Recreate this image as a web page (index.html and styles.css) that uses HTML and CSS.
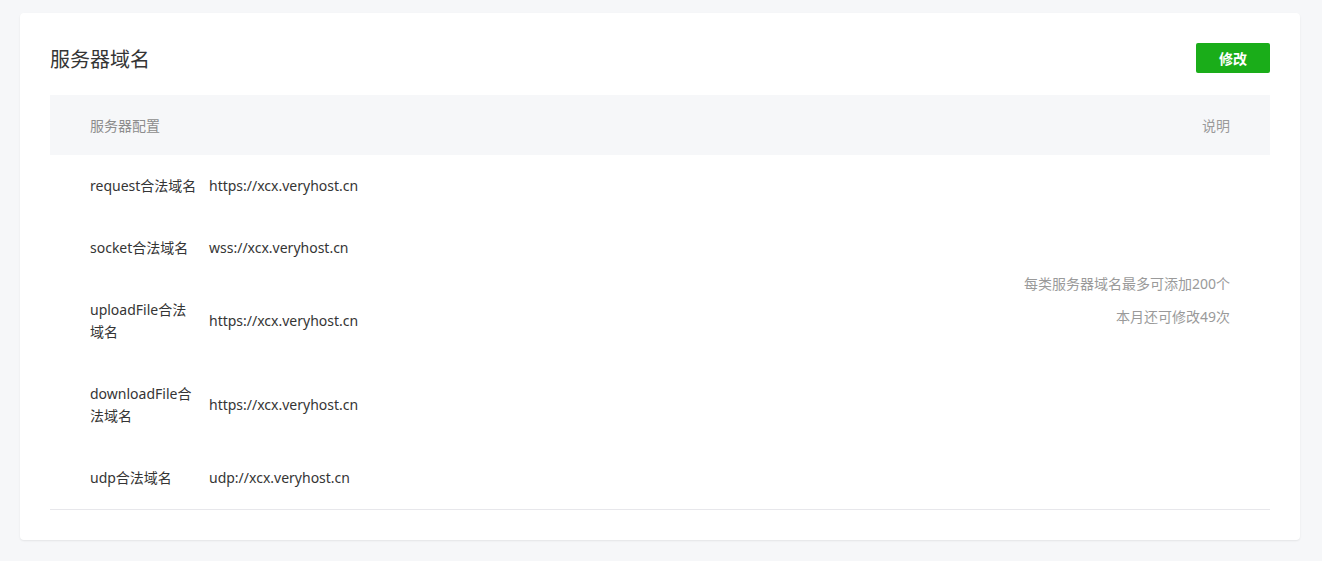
FILE: index.html
```html
<!DOCTYPE html>
<html lang="zh-CN">
<head>
	<meta charset="UTF-8">
	<title>服务器域名</title>
	<link rel="stylesheet" href="styles.css">
</head>
<body>
	<div class="m-panel">
		<div class="hd">
			<h2 class="title">服务器域名</h2>
			<button class="btn-primary">修改</button>
		</div>
		<table class="domain-table">
			<thead>
				<tr>
					<th class="col-label" colspan="2">服务器配置</th>
					<th class="col-desc">说明</th>
				</tr>
			</thead>
			<tbody>
				<tr>
					<td class="col-label">request合法域名</td>
					<td class="col-value">https://xcx.veryhost.cn</td>
					<td class="col-desc" rowspan="5">
						<p>每类服务器域名最多可添加200个</p>
						<p>本月还可修改49次</p>
					</td>
				</tr>
				<tr>
					<td class="col-label">socket合法域名</td>
					<td class="col-value">wss://xcx.veryhost.cn</td>
				</tr>
				<tr>
					<td class="col-label">uploadFile合法域名</td>
					<td class="col-value">https://xcx.veryhost.cn</td>
				</tr>
				<tr>
					<td class="col-label">downloadFile合法域名</td>
					<td class="col-value">https://xcx.veryhost.cn</td>
				</tr>
				<tr>
					<td class="col-label">udp合法域名</td>
					<td class="col-value">udp://xcx.veryhost.cn</td>
				</tr>
			</tbody>
		</table>
	</div>
</body>
</html>
```

FILE: styles.css
```css
body {
	margin: 0;
	padding: 13px 22px 20px 20px;
	background-color: #f6f7f9;
	font-family: "Noto Sans", "Noto Sans CJK SC", sans-serif;
	font-size: 14px;
	color: #353535;
}
.m-panel {
	background-color: #fff;
	border-radius: 4px;
	box-shadow: 0 1px 2px rgba(0, 0, 0, 0.08);
	padding: 30px 30px 30px;
}
.m-panel .hd {
	display: flex;
	justify-content: space-between;
	align-items: center;
	height: 30px;
	margin-bottom: 22px;
}
.m-panel .title {
	margin: 0;
	font-size: 20px;
	font-weight: normal;
	color: #353535;
}
.btn-primary {
	width: 74px;
	height: 30px;
	border: 0;
	border-radius: 2px;
	background-color: #1aad19;
	color: #fff;
	font-family: inherit;
	font-size: 14px;
	font-weight: bold;
	cursor: pointer;
}
.domain-table {
	width: 100%;
	border-collapse: collapse;
	border-bottom: 1px solid #e7e7eb;
}
.domain-table th {
	height: 60px;
	padding: 0;
	background-color: #f6f7f9;
	color: #8d8d8d;
	font-weight: normal;
	text-align: left;
}
.domain-table td {
	padding: 20px 0;
	line-height: 22px;
	vertical-align: middle;
}
.domain-table .col-label {
	width: 109px;
	padding-left: 40px;
	padding-right: 10px;
}
.domain-table th.col-label {
	width: auto;
}
.domain-table .col-desc {
	padding-right: 40px;
	text-align: right;
	color: #9a9a9a;
}
.domain-table td.col-desc {
	vertical-align: top;
	padding-top: 118px;
}
.domain-table .col-desc p {
	margin: 0 0 11px;
}
```
